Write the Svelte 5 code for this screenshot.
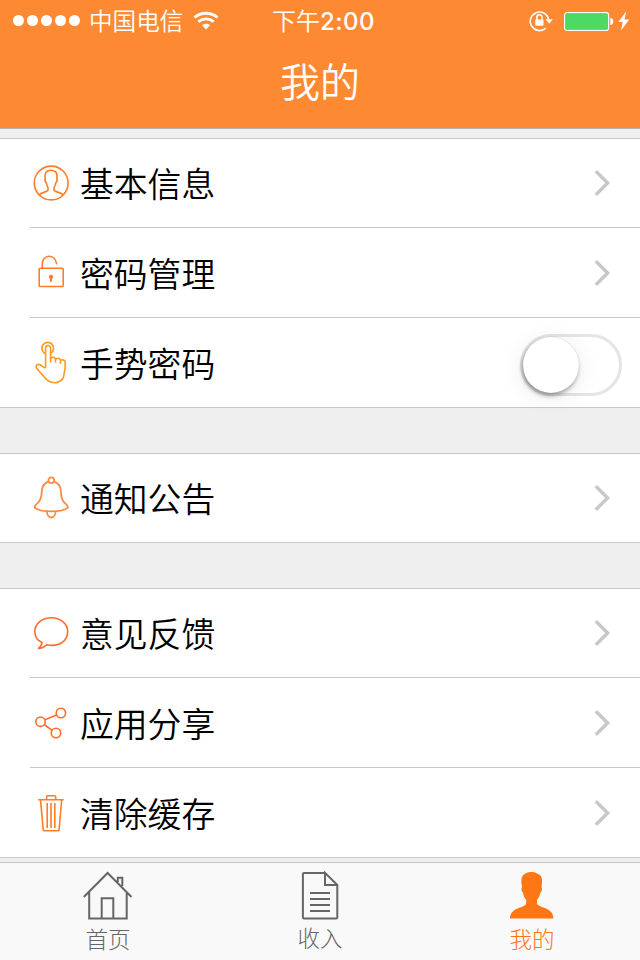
<script>
  let gesture = false;
  let current = "mine";

  const groups = [
    [
      { icon: "user", label: "基本信息" },
      { icon: "lock", label: "密码管理" },
      { icon: "hand", label: "手势密码", toggle: true },
    ],
    [{ icon: "bell", label: "通知公告" }],
    [
      { icon: "chat", label: "意见反馈" },
      { icon: "share", label: "应用分享" },
      { icon: "trash", label: "清除缓存" },
    ],
  ];

  const tabs = [
    { id: "home", label: "首页" },
    { id: "income", label: "收入" },
    { id: "mine", label: "我的" },
  ];
</script>

<div class="page">
  <header>
    <div class="status">
      <div class="left">
        <div class="dots">
          {#each { length: 5 } as _}
            <span class="dot"></span>
          {/each}
        </div>
        <span class="carrier">中国电信</span>
        <svg class="wifi" width="26" height="20" viewBox="0 0 26 20">
          <path d="M1.500 6.500C8 .8 18 .8 24.500 6.500" />
          <path d="M5.300 10.800C9.800 7 16.200 7 20.700 10.800" />
          <path class="fill" d="M9 14.200Q13 11.400 17 14.200L13 18.500Z" />
        </svg>
      </div>
      <div class="time">下午<b>2:00</b></div>
      <div class="right">
        <svg width="24" height="22" viewBox="0 0 24 22">
          <path class="ring" d="M16.800 18.200A9.300 9.300 0 1 1 19.700 9.500" />
          <path class="fill" d="M16.500 9.300h7.300l-3.600 4.500z" />
          <rect class="fill" x="6.300" y="9.500" width="8.200" height="6.200" rx=".6" />
          <path class="ring" d="M7.900 10V7.300a2.500 2.500 0 0 1 5 0V10" />
        </svg>
        <svg class="battery" width="50" height="20" viewBox="0 0 50 20">
          <rect class="case" x=".6" y="1.600" width="44" height="17.800" rx="2.500" />
          <rect class="charge" x="1.600" y="2.600" width="42" height="15.800" rx="1" />
          <path class="fill" d="M46.300 7h1q2 .5 2 3.500t-2 3.500h-1z" />
        </svg>
        <svg width="12" height="20" viewBox="0 0 12 20">
          <path class="fill" d="M8.300.3L.3 11h4.500L3 19.500 11.300 8.500H6.500z" />
        </svg>
      </div>
    </div>
    <h1>我的</h1>
  </header>

  <main>
    {#each groups as rows}
      <section>
        {#each rows as row}
          <div class="row">
            <svg class="icon {row.icon}" width="42" height="44" viewBox="0 0 42 44">
              {#if row.icon == "user"}
                <circle cx="21.200" cy="22" r="16.900" />
                <path d="M9.300 33.800C11 31.500 16.500 31.300 18 29.300V26.500C16.700 25 16.700 23.200 16.300 21.800C14.700 20.500 14.800 18.800 15.200 17.800C14.200 12.500 16 9.300 21 9.300S27.800 12.500 26.900 17.800C27.300 18.800 27.300 20.500 25.800 21.800C25.400 23.200 25.300 25 24 26.500V29.300C25.500 31.300 31.200 31.500 33 33.800" />
              {:else if row.icon == "lock"}
                <rect x="9.200" y="17.300" width="24" height="18.200" rx="1" />
                <path d="M12.300 17.300V13.200C12.300 3 25 2 26.800 13.300" />
                <path class="solid" d="M18.800 26a2.200 2.200 0 1 1 4.400 0q0 1-1.200 2v2.700h-2V28q-1.200-1-1.200-2z" />
              {:else if row.icon == "hand"}
                <path d="M15.300 12.600A5.900 5.900 0 1 1 20.600 12.400" />
                <path d="M15.600 27V7A2.500 2.500 0 0 1 20.600 7V21V18.500C20.600 15.500 25.500 15.500 25.500 18.800V21V19.300C25.500 16.500 30.500 16.500 30.500 20V22.500V20.500C30.500 17.800 35.300 18.500 35.300 21.500C35.500 26 34.800 31 33.500 36C33 39 28 41.700 24.500 41.700C19 41.700 16.500 39 14.500 36.300C11.500 33 8.500 29.500 6.600 27C5 24.800 7.200 22.500 10 23.800C12 25 14 27 15.600 27" />
              {:else if row.icon == "bell"}
                <circle cx="21.300" cy="4.200" r="2.900" />
                <path d="M18.500 5.700C13.500 7.500 12 11 11.800 15C11.700 20 10.800 23.500 8.500 26.300C6 28.500 4.300 29.500 4.800 31.700C7.500 34.300 13 35.400 21.300 35.400S35 34.300 37.900 31.700C38.400 29.500 36.500 28.500 34 26.300C31.700 23.500 31 20 30.900 15C30.700 11 29 7.500 24.200 5.700" />
                <path d="M17 35.500C17 43.500 25.600 43.500 25.600 35.500" />
              {:else if row.icon == "chat"}
                <path d="M16.600 33.800C31 36.500 37.700 28.500 37.700 20.500C37.700 12.500 30 6.800 21.200 6.800S4.800 12.500 4.800 20.500C4.800 25.500 7.500 29.500 12 31.500C11.800 34 10.500 36 8.500 37.500C12 37.500 14.500 36 16.600 33.800Z" />
              {:else if row.icon == "share"}
                <circle cx="10.500" cy="20.700" r="4.700" />
                <circle cx="30.900" cy="12" r="4.700" />
                <circle cx="26" cy="32" r="4.700" />
                <path d="M15 18.800L26.500 14M14.200 23.500L22.200 29.300" />
              {:else}
                <path d="M8.200 8.700H33.800M16.600 8.700V5.700Q16.600 4.700 17.600 4.700H24.700Q25.700 4.700 25.700 5.700V8.700" />
                <path d="M10.500 8.700L13.200 38.500Q13.400 39.700 14.500 39.700H27.800Q28.900 39.700 29.100 38.500L31.700 8.700" />
                <path d="M17.200 12V37M21 12V37M24.800 12V37" />
              {/if}
            </svg>
            <span class="label">{row.label}</span>
            {#if row.toggle}
              <button
                class="switch"
                class:on={gesture}
                aria-label={row.label}
                on:click={() => (gesture = !gesture)}
              >
                <span class="knob"></span>
              </button>
            {:else}
              <svg class="arrow" width="18" height="28" viewBox="0 0 18 28">
                <path d="M1.800 2.300L13.600 14L1.800 25.700" />
              </svg>
            {/if}
          </div>
        {/each}
      </section>
    {/each}
  </main>

  <nav>
    {#each tabs as tab}
      <button
        class="tab {tab.id}"
        class:active={current == tab.id}
        on:click={() => (current = tab.id)}
      >
        <svg width="50" height="50" viewBox="0 0 50 50">
          {#if tab.id == "home"}
            <path d="M.8 27L24.600 3L48.500 27M6.200 22V48.500H43.700V22M18.700 48V28.300H30.300V48M34.800 12V7.700H39.300V16" />
          {:else if tab.id == "income"}
            <path d="M30 2.900H9Q7.900 2.900 7.900 4V47.500Q7.900 48.600 9 48.600H41.200Q42.300 48.600 42.300 47.500V15L30 2.900V15H42.300M15 23H35M15 29H35M15 35H35M15 41H35" />
          {:else}
            <path class="solid" d="M3 48.500C3 42 8 39 13 37.500C17.500 36 19.200 34.500 19.200 33V29.800C17 27.500 16.300 25 16 22.500C14.300 21.500 14 18.500 15 17C14 12 14 8.500 15.500 6C18 2.500 23 1.200 28 2.500C29.500 3 30.500 4 32 4.300C35.500 6.500 35.500 11 34.500 17C35.500 18.500 35 21.500 33.500 22.500C33 25 32.200 27.500 30 29.800V33C30 34.500 32 36 36.500 37.500C41.500 39 46.400 42 46.400 48.500Z" />
          {/if}
        </svg>
        <span>{tab.label}</span>
      </button>
    {/each}
  </nav>
</div>

<style>
  .page {
    width: 640px;
    height: 960px;
    display: flex;
    flex-direction: column;
    overflow: hidden;
    background-color: #efefef;
    font-family: "Noto Sans CJK SC", sans-serif;
    font-weight: 350;
    color: #000;
  }
  svg {
    display: block;
    flex: none;
    fill: none;
  }
  header {
    height: 129px;
    box-sizing: border-box;
    background-color: #fd8a33;
    border-bottom: 1px solid #b2b2b2;
    color: #fff;
  }
  .status {
    height: 41px;
    display: grid;
    grid-template-columns: 1fr auto 1fr;
    align-items: center;
    padding: 0 10px 0 13px;
    font-size: 24px;
    line-height: 39px;
  }
  .status svg {
    stroke: #fff;
  }
  .status .fill {
    fill: #fff;
    stroke: none;
  }
  .left,
  .right,
  .dots {
    display: flex;
    align-items: center;
  }
  .dots {
    gap: 3px;
  }
  .dot {
    width: 11px;
    height: 11px;
    border-radius: 50%;
    background-color: #fff;
  }
  .left,
  .right,
  .time {
    height: 41px;
  }
  .carrier {
    margin-left: 9px;
    font-size: 23.6px;
  }
  .wifi {
    margin-left: 10px;
    stroke-width: 2.8;
  }
  .time {
    padding-left: 4px;
  }
  .time b {
    font-family: Inter, "Liberation Sans", sans-serif;
    font-weight: 500;
    letter-spacing: 0.5px;
  }
  .right {
    justify-content: flex-end;
  }
  .ring {
    stroke-width: 1.6;
  }
  .battery {
    margin: 0 4px 0 11px;
  }
  .case {
    stroke-width: 1.2;
  }
  .charge {
    fill: #4cd964;
    stroke: none;
  }
  h1 {
    margin: 0;
    font-size: 40px;
    line-height: 79px;
    font-weight: 350;
    text-align: center;
  }
  main {
    flex: 1;
    min-height: 0;
    padding-top: 9px;
    display: flex;
    flex-direction: column;
    gap: 45px;
  }
  section {
    background-color: #fff;
    box-shadow: inset 0 1px #c8c7cc, inset 0 -1px #c8c7cc;
  }
  .row {
    height: 90px;
    padding: 0 28px 0 30px;
    display: flex;
    align-items: center;
    position: relative;
  }
  .row:not(:last-child)::after {
    content: "";
    position: absolute;
    left: 30px;
    right: 0;
    bottom: 0;
    height: 1px;
    background-color: #c8c7cc;
  }
  .icon {
    stroke: #ff7d26;
    stroke-width: 1.6;
    stroke-linejoin: round;
  }
  .icon.hand {
    stroke: #ff9a1a;
  }
  .icon.bell {
    stroke: #ff8a45;
    stroke-width: 1.8;
  }
  .icon.chat,
  .icon.share {
    stroke: #ff6c2c;
  }
  .icon .solid {
    fill: #ff7d26;
    stroke: none;
  }
  .label {
    flex: 1;
    margin-left: 8px;
    padding-bottom: 1px;
    font-size: 33.8px;
    line-height: 50px;
    font-weight: 350;
  }
  .arrow {
    stroke: #c7c7cc;
    stroke-width: 3.4;
  }
  .switch {
    width: 102px;
    height: 62px;
    margin: 4px -10px 0 0;
    padding: 0;
    display: flex;
    border: 3px solid #e5e5e5;
    border-radius: 31px;
    background-color: #fff;
  }
  .knob {
    width: 56px;
    height: 56px;
    border-radius: 50%;
    background-color: #fff;
    box-shadow: 0 0 1px rgba(0, 0, 0, 0.2), -1px 3px 4px rgba(0, 0, 0, 0.32),
      0 4px 24px rgba(0, 0, 0, 0.09);
    transition: transform 0.2s;
  }
  .switch.on {
    background-color: #4cd964;
    border-color: #4cd964;
  }
  .switch.on .knob {
    transform: translateX(40px);
  }
  nav {
    height: 98px;
    box-sizing: border-box;
    padding: 0 2px;
    display: flex;
    background-color: #f9f9f9;
    border-top: 1px solid #c4c4c4;
  }
  .tab {
    flex: 1;
    padding: 7px 0 0;
    display: flex;
    flex-direction: column;
    align-items: center;
    border: 0;
    background: none;
    color: #666;
    font-family: inherit;
    font-size: 22.5px;
    font-weight: 300;
    line-height: 37px;
  }
  .tab svg {
    stroke: #666;
    stroke-width: 2;
  }
  .tab.income {
    line-height: 35px;
  }
  .tab.active {
    color: #ff7714;
  }
  .tab .solid {
    fill: #666;
    stroke: none;
  }
  .tab.active .solid {
    fill: #ff7714;
  }
</style>
